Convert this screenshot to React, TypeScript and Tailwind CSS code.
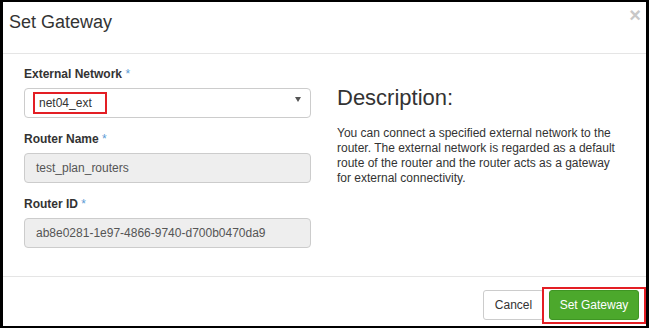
function Field({
  label,
  value,
  readOnly,
}: {
  label: string;
  value: string;
  readOnly?: boolean;
}) {
  return (
    <div>
      <label className="block h-[17px] text-[12px] leading-[17px] font-bold text-[#333]">
        {label} <span className="text-[#5b9bd5] font-normal">*</span>
      </label>
      {readOnly ? (
        <div className="mt-[5px] h-[30px] flex items-center rounded-[4px] border border-[#ccc] bg-[#eee] pl-[11px] text-[12px] text-[#555]">
          {value}
        </div>
      ) : null}
    </div>
  );
}

export default function App() {
  return (
    <div
      className="w-[651px] h-[329px] bg-white"
      style={{ fontFamily: '"Liberation Sans", Arial, sans-serif' }}
    >
      <div className="w-[649px] h-[328px] border-black border-t-2 border-b-2 border-l-[3px] border-r-[3px] flex flex-col">
        {/* header */}
        <div className="h-[52px] shrink-0 border-b border-[#e5e5e5] flex items-start justify-between pl-[6px]">
          <h4 className="mt-[10px] text-[18px] leading-[20px] text-[#333]">
            Set Gateway
          </h4>
          <span className="mt-[3px] mr-[5px] text-[20px] leading-none font-bold text-[#c8c8c8]">
            ×
          </span>
        </div>

        {/* body */}
        <div className="flex pl-[21px] pt-[12px] pb-[28px] shrink-0">
          <div className="w-[287px] flex flex-col gap-[13px]">
            <div>
              <label className="block h-[17px] text-[12px] leading-[17px] font-bold text-[#333]">
                External Network <span className="text-[#5b9bd5] font-normal">*</span>
              </label>
              <div className="relative mt-[5px] h-[30px] flex items-center justify-between rounded-[4px] border border-[#ccc] bg-white pl-[14px] pr-[9px] text-[12px] text-[#333]">
                <span>net04_ext</span>
                <svg width="6" height="5" viewBox="0 0 6 5" className="-mt-[7px]">
                  <path d="M0 0 L6 0 L3 5 Z" fill="#555" />
                </svg>
                <div className="absolute left-[8px] top-[3px] w-[74px] h-[22px] border-2 border-[#e31e24]" />
              </div>
            </div>
            <Field label="Router Name" value="test_plan_routers" readOnly />
            <Field
              label="Router ID"
              value="ab8e0281-1e97-4866-9740-d700b0470da9"
              readOnly
            />
          </div>

          <div className="ml-[26px] mt-[20px]">
            <h3 className="text-[22px] leading-[24px] text-[#333]">
              Description:
            </h3>
            <p className="mt-[16px] text-[12px] leading-[15px] text-[#333] whitespace-nowrap">
              You can connect a specified external network to the
              <br />
              router. The external network is regarded as a default
              <br />
              route of the router and the router acts as a gateway
              <br />
              for external connectivity.
            </p>
          </div>
        </div>

        {/* footer */}
        <div className="flex-1 border-t border-[#e5e5e5] flex justify-end items-start pt-[13px] pr-[7px]">
          <button className="h-[30px] w-[61px] rounded-[3px] border border-[#ccc] bg-white text-[12px] text-[#333]">
            Cancel
          </button>
          <div className="relative ml-[5px]">
            <button className="h-[30px] w-[90px] rounded-[3px] border border-[#3f9524] bg-[#4ca82c] text-[12px] text-white">
              Set Gateway
            </button>
            <div className="absolute -left-[7px] -top-[3px] w-[104px] h-[37px] border-2 border-[#e31e24]" />
          </div>
        </div>
      </div>
    </div>
  );
}
